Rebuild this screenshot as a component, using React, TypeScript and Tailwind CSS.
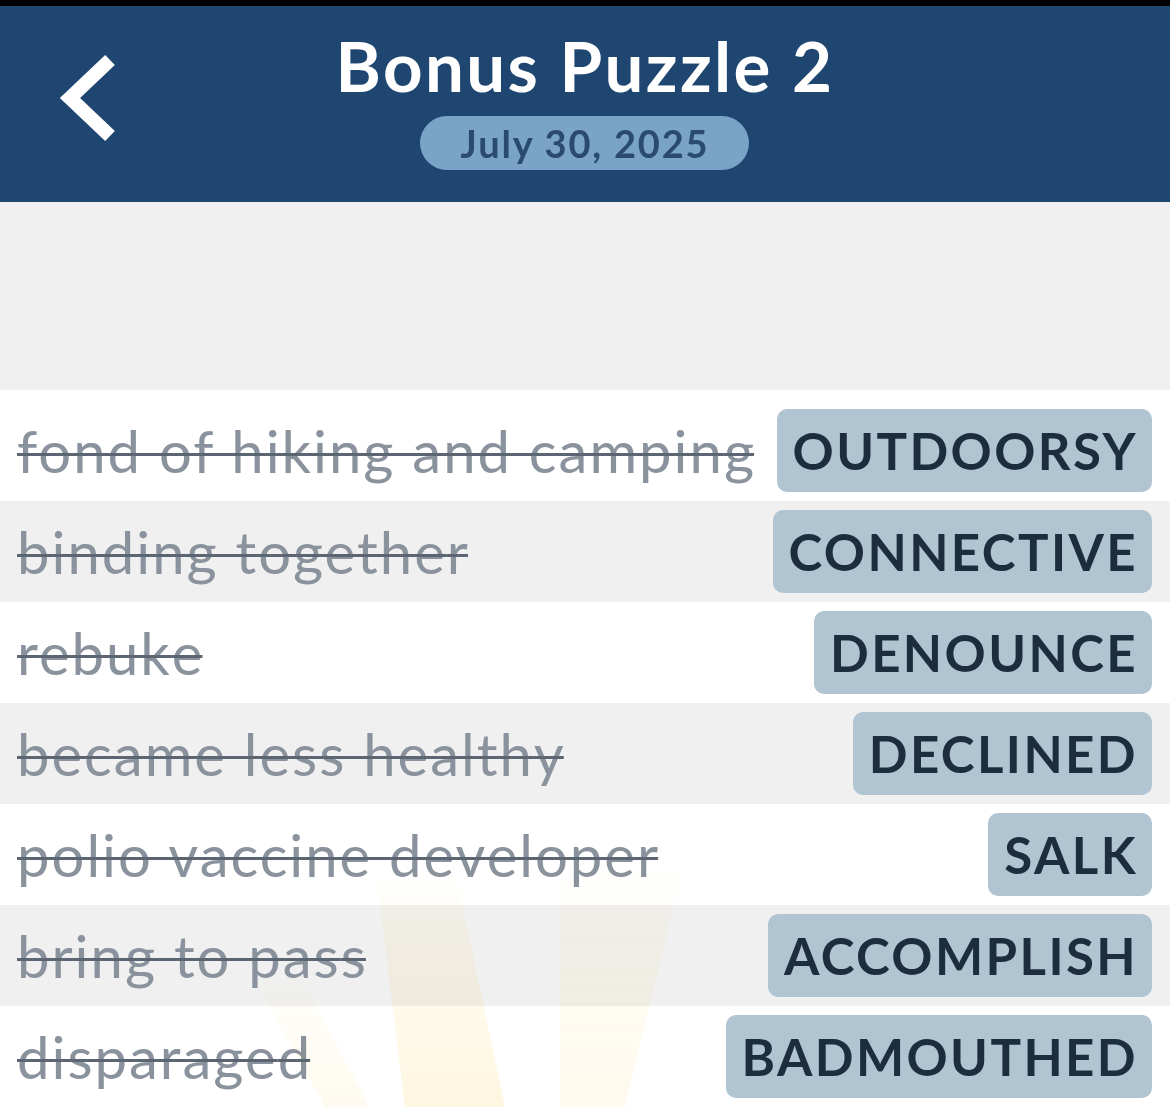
const rows = [
  { clue: "fond of hiking and camping", answer: "OUTDOORSY" },
  { clue: "binding together", answer: "CONNECTIVE" },
  { clue: "rebuke", answer: "DENOUNCE" },
  { clue: "became less healthy", answer: "DECLINED" },
  { clue: "polio vaccine developer", answer: "SALK" },
  { clue: "bring to pass", answer: "ACCOMPLISH" },
  { clue: "disparaged", answer: "BADMOUTHED" },
];

function BackChevron() {
  return (
    <svg width="70" height="100" viewBox="50 50 70 100" fill="none">
      <polyline
        points="112,60 72,98 112,136"
        stroke="white"
        strokeWidth="14"
        strokeLinejoin="miter"
        strokeLinecap="butt"
      />
    </svg>
  );
}

function Rays() {
  // faint sunburst behind the bottom rows
  return (
    <svg
      className="pointer-events-none absolute left-0 bottom-0 mix-blend-multiply opacity-70"
      width="1170"
      height="280"
      viewBox="0 827 1170 280"
    >
      <defs>
        <linearGradient id="fade" x1="0" y1="0" x2="0" y2="1">
          <stop offset="0" stopColor="#fff8e4" stopOpacity="0" />
          <stop offset="0.3" stopColor="#fff8e4" stopOpacity="0.8" />
          <stop offset="1" stopColor="#fff3d4" stopOpacity="1" />
        </linearGradient>
      </defs>
      <polygon points="377,880 455,870 505,1107 405,1107" fill="url(#fade)" />
      <polygon points="560,860 685,860 625,1107 560,1107" fill="url(#fade)" opacity="0.6" />
      <polygon points="255,980 300,975 370,1107 325,1107" fill="url(#fade)" opacity="0.5" />
    </svg>
  );
}

function Row({ clue, answer, index }: { clue: string; answer: string; index: number }) {
  return (
    <div
      className={`flex items-center justify-between h-[101px] pl-[17px] pr-[18px] ${
        index % 2 === 1 ? "bg-[#f0f0f0]" : "bg-white"
      } ${index === 0 ? "box-content pt-[10px]" : ""}`}
    >
      <span className="text-[58px] leading-none text-[#8a939d] line-through decoration-[#5b6672] decoration-[3px] whitespace-nowrap">
        <span className="tracking-[2px]">{clue.slice(0, -1)}</span>
        {clue.slice(-1)}
      </span>
      <span className="h-[83px] flex items-center pl-4 pr-[14px] rounded-[10px] bg-[#b0c4d2] text-[51px] font-bold leading-none tracking-[2.4px] text-[#1c2d3f] whitespace-nowrap">
        {answer}
      </span>
    </div>
  );
}

export default function App() {
  return (
    <div className="relative w-[1170px] h-[1107px] overflow-hidden bg-white font-['Lato','Noto_Sans',sans-serif]">
      <div className="h-[6px] bg-black" />
      <header className="h-[196px] bg-[#1f4670] grid grid-cols-[1fr_auto_1fr]">
        <div className="pl-[48px] pt-[44px]">
          <BackChevron />
        </div>
        <div className="flex flex-col items-center pt-[25px]">
          <h1 className="text-[69px] leading-none font-bold tracking-[2.4px] text-white">Bonus Puzzle 2</h1>
          <div className="mt-[16px] w-[329px] h-[54px] rounded-full bg-[#79a4c8] flex items-center justify-center text-[38px] leading-none font-bold tracking-[1.8px] text-[#2a4a70]">
            July 30, 2025
          </div>
        </div>
        <div />
      </header>
      <div className="h-[188px] bg-[#f0f0f0]" />
      {rows.map((r, i) => (
        <Row key={r.answer} clue={r.clue} answer={r.answer} index={i} />
      ))}
      <Rays />
    </div>
  );
}
